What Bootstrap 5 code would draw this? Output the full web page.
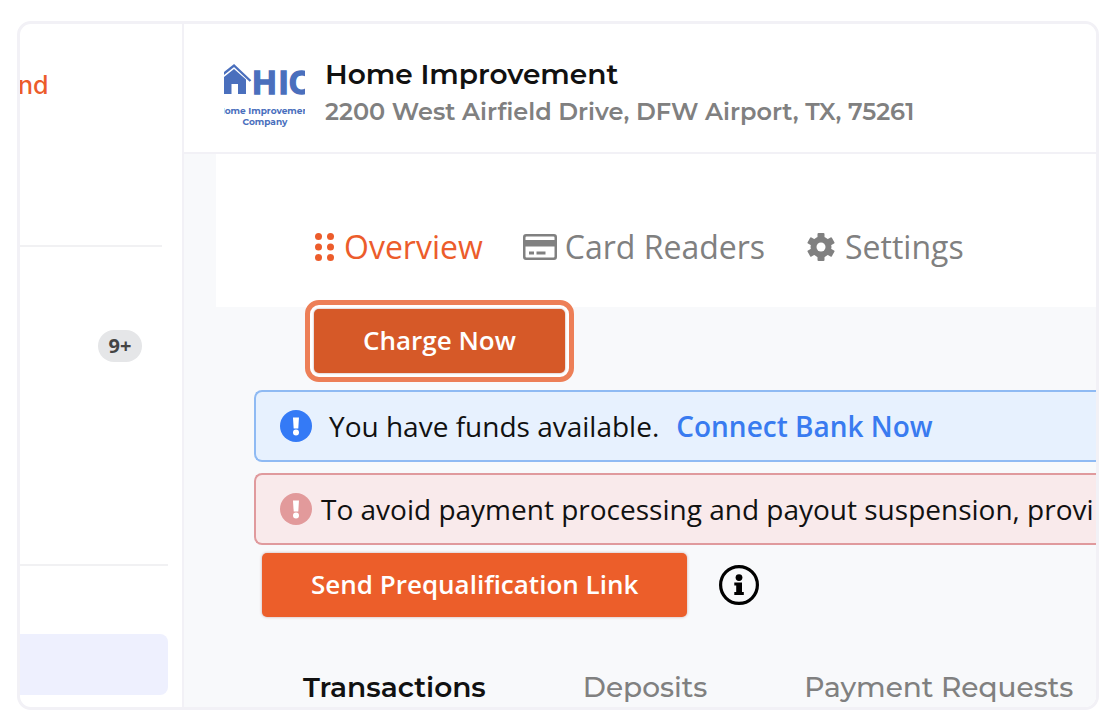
<!DOCTYPE html>
<html lang="en">
<head>
<meta charset="utf-8">
<meta name="viewport" content="width=device-width, initial-scale=1">
<title>Home Improvement – Overview</title>
<link href="https://cdn.jsdelivr.net/npm/bootstrap@5.3.0/dist/css/bootstrap.min.css" rel="stylesheet">
<style>
  :root { --line: #f2f1f6; --brand: #ec5c2b; --muted: #808080; --ink: #111; }
  body { background: #fff; color: var(--ink); font-family: "Open Sans", "Noto Sans", sans-serif; padding: 21px 15px 10px 17px; }
  .heading-font { font-family: Montserrat, Inter, sans-serif; }
  .app-frame { border: 3px solid var(--line); border-radius: 14px; min-height: calc(100vh - 31px); }

  .side { width: 164px; border-right: 2px solid var(--line); }
  .brand-name { color: var(--brand); font: 500 25px/32px Inter, sans-serif; padding-top: 45px; height: 221px; margin-left: -2px; }
  .rule { height: 2px; background: #f1f1f3; }
  .rule-short { margin-right: 20px; }
  .rule-long { margin: 202px 14px 68px 0; }
  .count-row { padding: 83px 40px 0 0; }
  .count { background: #e5e6e8; color: #444; font-family: "Noto Sans", sans-serif; font-size: 20px; line-height: 32px; width: 44px; font-weight: 700; }
  .side-item { background: #eef0fe; height: 61px; margin-right: 14px; border-radius: 0 8px 8px 0; }

  .top-bar { height: 130px; border-bottom: 2px solid var(--line); padding: 32px 0 0 40px; gap: 20px; }
  .org-logo { width: 81px; height: 70px; margin-top: 4px; }
  .org-name { font-size: 28px; line-height: 37px; font-weight: 600; margin: 0; }
  .org-address { font-size: 24px; line-height: 37px; font-weight: 600; color: var(--muted); }

  .content { background: #f8f9fb; min-width: 0; }
  .menu-panel { margin-left: 32px; height: 153px; padding: 68px 0 0 98px; background: #fff; gap: 40px; }
  .menu-panel .nav-link { color: var(--muted); font-size: 32px; line-height: 50px; gap: 8px; padding: 0; }
  .menu-panel .nav-link.active { color: var(--brand); }

  .cta { background: #ec5e2a; color: #fff; border: 0; border-radius: 5px; height: 64px; font-size: 26px; line-height: 36px; font-weight: 600; padding: 0 49px 2px; box-shadow: 0 0 3px #c9a8a8; }
  .cta:hover { background: #d65928; color: #fff; }
  .cta-ring { background: #d65928; box-shadow: 0 0 2px #a88, 0 0 0 6px #fff; outline: 5px solid #ed7f57; outline-offset: 4px; }
  .charge-row { padding: 2px 0 17px 130px; }

  .notice { height: 72px; margin: 0 0 11px 70px; padding: 0 0 0 24px; border: 2px solid; border-right: 0; border-radius: 8px 0 0 8px; font-size: 28px; line-height: 40px; gap: 17px; }
  .notice-info { background: #e7f1fe; border-color: #8fbaf3; }
  .notice-warn { background: #f9eaeb; border-color: #e09a9d; margin-bottom: 8px; gap: 9px; }
  .notice a { color: #397bf0; font-weight: 600; }

  .link-row { padding-left: 78px; gap: 32px; }
  .tabs-row { padding: 50px 0 0 119px; gap: 97px; font-size: 28px; line-height: 40px; }
  .tabs-row .nav-link { padding: 0; color: var(--muted); font-weight: 500; }
  .tabs-row .nav-link.active { color: var(--ink); font-weight: 600; }
</style>
</head>
<body>
<div class="app-frame d-flex overflow-hidden">
  <aside class="side flex-shrink-0">
    <div class="brand-name">nd</div>
    <div class="rule rule-short"></div>
    <div class="count-row d-flex justify-content-end"><span class="count rounded-pill text-center">9+</span></div>
    <div class="rule rule-long"></div>
    <div class="side-item"></div>
  </aside>

  <main class="content flex-grow-1 overflow-hidden">
    <header class="top-bar d-flex bg-white">
      <svg class="org-logo flex-shrink-0" viewBox="0 0 81 70" role="img" aria-label="Home Improvement Company">
        <g fill="#4a6fbd">
          <path d="M0 17 10 9 22 19.500V34H14V24H7.500V34H0z"/>
          <path d="M-2 15 10 5.500 26.500 21" fill="none" stroke="#4a6fbd" stroke-width="2.400"/>
          <text font-family="Liberation Sans, sans-serif" font-weight="700" font-size="33" x="28.500 55 65" y="33.500" stroke="#4a6fbd" stroke-width="1.400">HIC</text>
          <g font-family="Montserrat, Inter, sans-serif" font-weight="700" font-size="9" text-anchor="middle">
            <text x="41" y="54">Home Improvement</text>
            <text x="41" y="65">Company</text>
          </g>
        </g>
      </svg>
      <div class="heading-font text-nowrap">
        <h1 class="org-name">Home Improvement</h1>
        <div class="org-address">2200 West Airfield Drive, DFW Airport, TX, 75261</div>
      </div>
    </header>

    <nav class="menu-panel nav flex-nowrap align-items-start text-nowrap">
      <a class="nav-link active d-flex align-items-center" href="#">
        <svg width="22" height="28" viewBox="0 0 22 28" fill="#ec5c2b" aria-hidden="true"><circle cx="4.500" cy="3.500" r="3.500"/><circle cx="16.500" cy="3.500" r="3.500"/><circle cx="4.500" cy="14" r="3.500"/><circle cx="16.500" cy="14" r="3.500"/><circle cx="4.500" cy="24.500" r="3.500"/><circle cx="16.500" cy="24.500" r="3.500"/></svg>
        Overview
      </a>
      <a class="nav-link d-flex align-items-center" href="#">
        <svg width="34" height="26" viewBox="0 0 34 26" aria-hidden="true"><path fill="#808080" fill-rule="evenodd" d="M3 0H31a3 3 0 0 1 3 3V23a3 3 0 0 1-3 3H3a3 3 0 0 1-3-3V3A3 3 0 0 1 3 0zM3.500 2.500A1 1 0 0 0 2.500 3.500V6H31.500V3.500A1 1 0 0 0 30.500 2.500zM2.500 12.500V22.500A1 1 0 0 0 3.500 23.500H30.500A1 1 0 0 0 31.500 22.500V12.500zM6 17.500H11V20.500H6zM13.500 17.500H22.500V20.500H13.500z"/></svg>
        Card Readers
      </a>
      <a class="nav-link d-flex align-items-center" href="#">
        <svg width="32" height="28" viewBox="-16 -14 32 28" aria-hidden="true">
          <g fill="#808080"><rect x="-3.500" y="-14" width="7" height="28" rx="1"/><rect x="-3.500" y="-14" width="7" height="28" rx="1" transform="rotate(60)"/><rect x="-3.500" y="-14" width="7" height="28" rx="1" transform="rotate(120)"/><circle r="10.500"/></g>
          <circle r="4.500" fill="#fff"/>
        </svg>
        Settings
      </a>
    </nav>

    <div class="charge-row d-flex"><button type="button" class="btn cta cta-ring">Charge Now</button></div>

    <div class="notice notice-info d-flex align-items-center text-nowrap overflow-hidden" role="status">
      <svg class="flex-shrink-0" width="32" height="32" viewBox="0 0 32 32" aria-hidden="true"><circle cx="16" cy="16" r="16" fill="#347af6"/><path d="M13 7.500H19L18.300 18.500H13.700z" fill="#fff"/><circle cx="16" cy="22.600" r="3" fill="#fff"/></svg>
      <span>You have funds available.</span>
      <a class="text-decoration-none" href="#">Connect Bank Now</a>
    </div>
    <div class="notice notice-warn d-flex align-items-center text-nowrap overflow-hidden" role="alert">
      <svg class="flex-shrink-0" width="32" height="32" viewBox="0 0 32 32" aria-hidden="true"><circle cx="16" cy="16" r="16" fill="#e29a9b"/><path d="M13 7.500H19L18.300 18.500H13.700z" fill="#fff"/><circle cx="16" cy="22.600" r="3" fill="#fff"/></svg>
      <span>To avoid payment processing and payout suspension, provi</span>
    </div>

    <div class="link-row d-flex align-items-center">
      <button type="button" class="btn cta text-nowrap">Send Prequalification Link</button>
      <button type="button" class="btn p-0 border-0 lh-1" aria-label="About prequalification">
        <svg class="d-block" width="40" height="40" viewBox="0 0 40 40" aria-hidden="true"><circle cx="20" cy="20" r="18.400" fill="none" stroke="#000" stroke-width="3.200"/><circle cx="20" cy="12.600" r="3.400"/><path d="M15.300 17.500H23V27H24.800V30H15.300V27H17.200V20.500H15.300z"/></svg>
      </button>
    </div>

    <nav class="tabs-row nav flex-nowrap heading-font text-nowrap">
      <a class="nav-link active" href="#">Transactions</a>
      <a class="nav-link" href="#">Deposits</a>
      <a class="nav-link" href="#">Payment Requests</a>
    </nav>
  </main>
</div>
<script src="https://cdn.jsdelivr.net/npm/bootstrap@5.3.0/dist/js/bootstrap.bundle.min.js"></script>
</body>
</html>
